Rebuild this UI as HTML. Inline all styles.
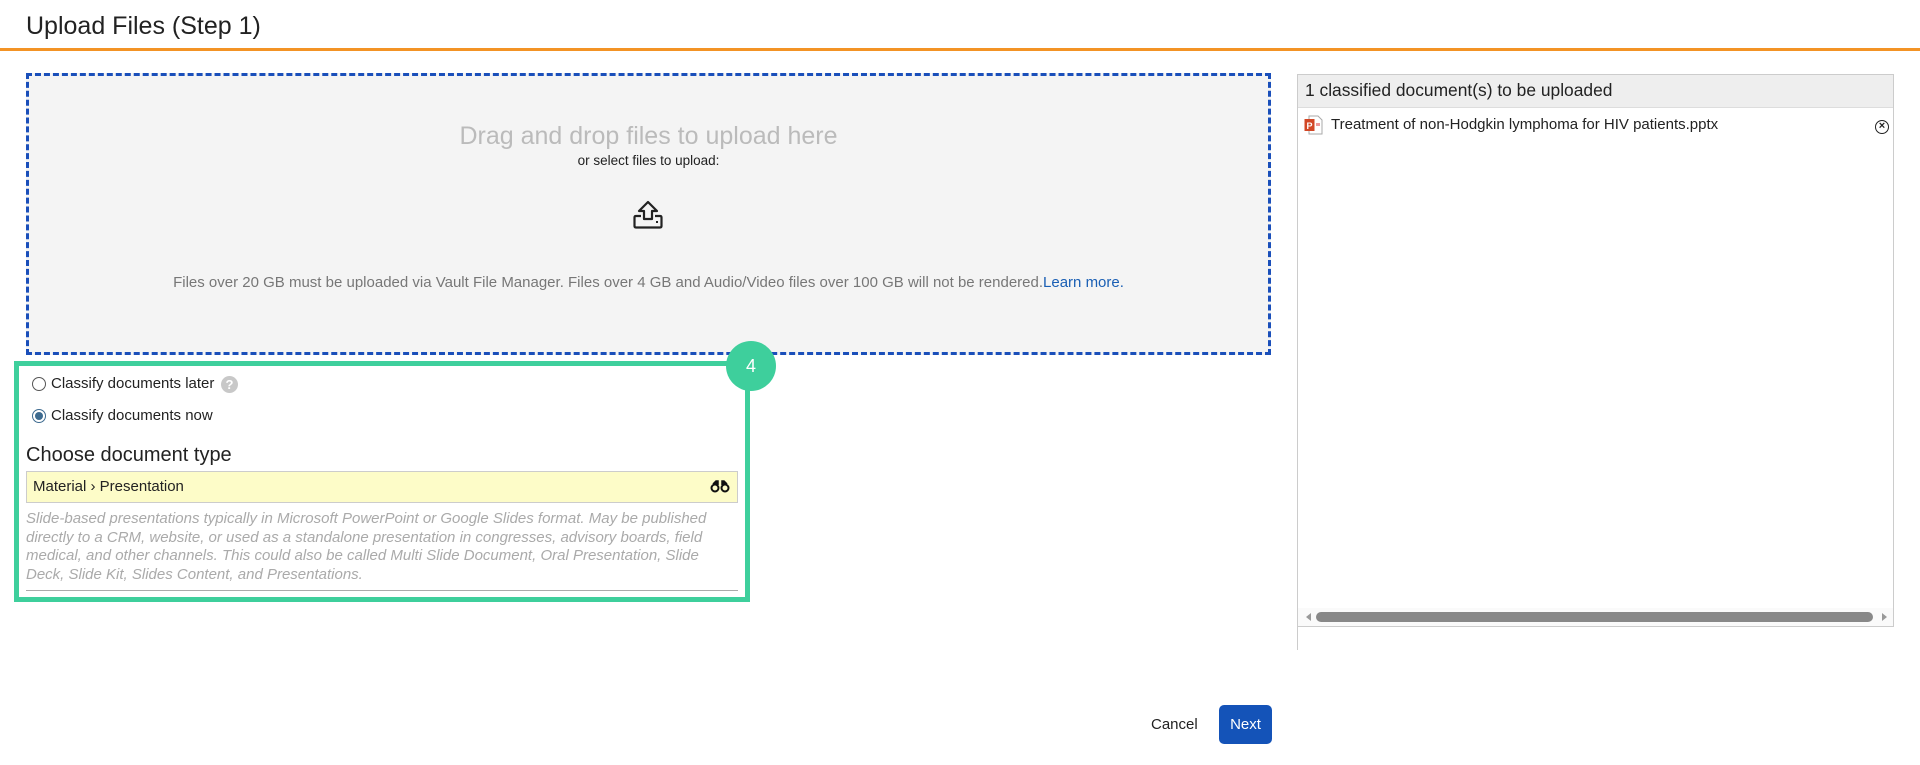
<!DOCTYPE html>
<html><head><meta charset="utf-8"><style>
*{box-sizing:border-box;margin:0;padding:0}
body{width:1920px;height:765px;background:#fff;font-family:"Liberation Sans",Arial,sans-serif;color:#222;position:relative;overflow:hidden}
.abs{position:absolute}
</style></head><body>
<div class="abs" style="left:26px;top:12px;font-size:25px;color:#222">Upload Files (Step 1)</div>
<div class="abs" style="left:0;top:48px;width:1920px;height:3px;background:#f39325"></div>

<div class="abs" style="left:26px;top:73px;width:1245px;height:282px;background:#f4f4f4;border:3px dashed #1a4fba"></div>
<div class="abs" style="left:26px;top:122px;width:1245px;text-align:center;font-size:25px;color:#bbb">Drag and drop files to upload here</div>
<div class="abs" style="left:26px;top:153px;width:1245px;text-align:center;font-size:13.5px;color:#222">or select files to upload:</div>
<svg class="abs" style="left:632px;top:200px" width="32" height="30" viewBox="0 0 32 30">
<path d="M16 2 L7 11 H12 V19 H20 V11 H25 Z" fill="none" stroke="#222" stroke-width="2.2" stroke-linejoin="round"/>
<path d="M9 16 H4 Q2.5 16 2.5 17.5 V26 Q2.5 27.5 4 27.5 H28 Q29.5 27.5 29.5 26 V17.5 Q29.5 16 28 16 H23" fill="none" stroke="#222" stroke-width="2.2"/>
<rect x="24" y="21" width="2" height="2" fill="#222"/>
</svg>
<div class="abs" style="left:26px;top:274px;width:1245px;text-align:center;font-size:15px;color:#777">Files over 20 GB must be uploaded via Vault File Manager. Files over 4 GB and Audio/Video files over 100 GB will not be rendered.<span style="color:#1a5fb4">Learn more.</span></div>

<div class="abs" style="left:14px;top:361px;width:736px;height:241px;border:5px solid #3ecf9c"></div>
<div class="abs" style="left:726px;top:341px;width:50px;height:50px;border-radius:50%;background:#3ecf9c;color:#fff;font-size:18px;text-align:center;line-height:50px">4</div>

<div class="abs" style="left:32px;top:377px;width:14px;height:14px;border:1px solid #555;border-radius:50%;background:#fff"></div>
<div class="abs" style="left:51px;top:375px;font-size:15px">Classify documents later</div>
<div class="abs" style="left:221px;top:376px;width:17px;height:17px;border-radius:50%;background:#c8c8c8;color:#fff;font-size:13px;font-weight:bold;text-align:center;line-height:17px">?</div>
<div class="abs" style="left:32px;top:409px;width:14px;height:14px;border:1px solid #3d6a8f;border-radius:50%;background:#fff"><div style="margin:2px;width:8px;height:8px;border-radius:50%;background:#3d6a8f"></div></div>
<div class="abs" style="left:51px;top:407px;font-size:15px">Classify documents now</div>

<div class="abs" style="left:26px;top:444px;font-size:20px;color:#222">Choose document type</div>
<div class="abs" style="left:26px;top:471px;width:712px;height:32px;background:#fdfcc8;border:1px solid #ccc"></div>
<div class="abs" style="left:33px;top:478px;font-size:15px">Material › Presentation</div>
<svg class="abs" style="left:710px;top:479px" width="20" height="14" viewBox="0 0 20 14"><circle cx="5" cy="9" r="3.5" fill="none" stroke="#111" stroke-width="2"/><circle cx="15" cy="9" r="3.5" fill="none" stroke="#111" stroke-width="2"/><path d="M3 5 L6 2 H8 V6 M17 5 L14 2 H12 V6" fill="#111" stroke="#111" stroke-width="1.5"/></svg>
<div class="abs" style="left:26px;top:510px;width:712px;font-size:15px;font-style:italic;color:#aaa;line-height:18.5px">Slide-based presentations typically in Microsoft PowerPoint or Google Slides format. May be published directly to a CRM, website, or used as a standalone presentation in congresses, advisory boards, field medical, and other channels. This could also be called Multi Slide Document, Oral Presentation, Slide Deck, Slide Kit, Slides Content, and Presentations.</div>
<div class="abs" style="left:26px;top:590px;width:712px;height:1px;background:#aaa"></div>

<div class="abs" style="left:1297px;top:74px;width:597px;height:553px;border:1px solid #ccc;background:#fff"></div>
<div class="abs" style="left:1297px;top:627px;width:1px;height:23px;background:#ccc"></div>
<div class="abs" style="left:1298px;top:75px;width:595px;height:33px;background:#eee;border-bottom:1px solid #ddd"></div>
<div class="abs" style="left:1305px;top:80px;font-size:17.4px;color:#222">1 classified document(s) to be uploaded</div>
<svg class="abs" style="left:1304px;top:115px" width="19" height="20" viewBox="0 0 19 20"><path d="M5 1 H14 L18 5 V19 H5 Z" fill="#fff" stroke="#aaa"/><rect x="0.5" y="4" width="10" height="12" fill="#d24726"/><text x="2.5" y="14" font-size="9" font-weight="bold" fill="#fff" font-family="Liberation Sans">P</text><rect x="12" y="8" width="4" height="3" fill="#e99"/></svg>
<div class="abs" style="left:1331px;top:116px;font-size:15px;color:#222">Treatment of non-Hodgkin lymphoma for HIV patients.pptx</div>
<div class="abs" style="left:1875px;top:120px;width:14px;height:14px;border:1.5px solid #222;border-radius:50%;font-size:11px;line-height:11px;text-align:center;font-weight:bold">×</div>
<div class="abs" style="left:1298px;top:608px;width:595px;height:18px;background:#fafafa"></div>
<div class="abs" style="left:1306px;top:613px;width:0;height:0;border-top:4px solid transparent;border-bottom:4px solid transparent;border-right:5px solid #999"></div>
<div class="abs" style="left:1316px;top:612px;width:557px;height:10px;border-radius:5px;background:#888"></div>
<div class="abs" style="left:1882px;top:613px;width:0;height:0;border-top:4px solid transparent;border-bottom:4px solid transparent;border-left:5px solid #999"></div>

<div class="abs" style="left:1151px;top:716px;font-size:15px;color:#222">Cancel</div>
<div class="abs" style="left:1219px;top:705px;width:53px;height:39px;background:#1453b8;border-radius:5px;color:#fff;font-size:15px;text-align:center;line-height:39px">Next</div>
</body></html>
